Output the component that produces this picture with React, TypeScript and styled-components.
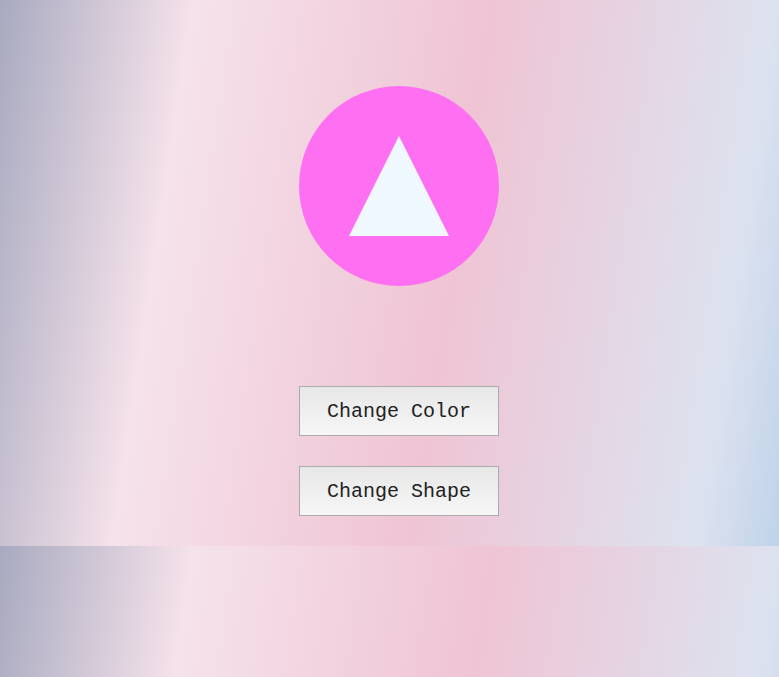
import React, { useState } from "react";
import styled, { createGlobalStyle } from "styled-components";

const GlobalStyle = createGlobalStyle`
  html, body { margin: 0; padding: 0; }
  body {
    background: linear-gradient(98.5deg, #a8aac0 0%, #f5e2ea 22.5%, #efc4d4 57%, #dde2ef 90%, #c0d3ea 100%);
    font-family: "Liberation Mono", "Courier New", monospace;
  }
`;

const Page = styled.main`
  display: flex;
  flex-direction: column;
  align-items: center;
  padding: 86px 0 30px 19px;
`;

const Circle = styled.div<{ $color: string }>`
  width: 200px;
  height: 200px;
  border-radius: 50%;
  background: ${(p) => p.$color};
  display: flex;
  align-items: center;
  justify-content: center;
`;

const Triangle = styled.div`
  width: 0;
  height: 0;
  border-left: 50px solid transparent;
  border-right: 50px solid transparent;
  border-bottom: 100px solid #f0f8ff;
`;

const Square = styled.div`
  width: 100px;
  height: 100px;
  background: #f0f8ff;
`;

const Controls = styled.div`
  display: flex;
  flex-direction: column;
  gap: 30px;
  margin-top: 100px;
`;

const Button = styled.button`
  box-sizing: border-box;
  width: 200px;
  height: 50px;
  border: 1px solid #ababab;
  background: linear-gradient(to bottom, #e7e7e7, #f6f6f6);
  font-family: "Liberation Mono", "Courier New", monospace;
  font-size: 20px;
  color: #222;
  cursor: pointer;
  padding: 0;
`;

const colors = ["#ff6ff2", "#6fa8ff", "#ffb36f"];

export default function App() {
  const [ci, setCi] = useState(0);
  const [tri, setTri] = useState(true);
  return (
    <>
      <GlobalStyle />
      <Page>
        <Circle $color={colors[ci]}>{tri ? <Triangle /> : <Square />}</Circle>
        <Controls>
          <Button onClick={() => setCi((ci + 1) % colors.length)}>Change Color</Button>
          <Button onClick={() => setTri(!tri)}>Change Shape</Button>
        </Controls>
      </Page>
    </>
  );
}
